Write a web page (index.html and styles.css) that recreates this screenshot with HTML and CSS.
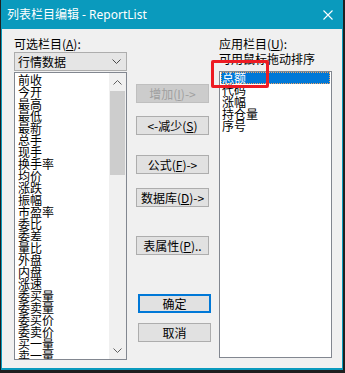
FILE: index.html
```html
<!DOCTYPE html>
<html lang="zh-CN">
<head>
    <meta charset="UTF-8">
    <title>列表栏目编辑 - ReportList</title>
    <link rel="stylesheet" href="styles.css">
</head>
<body>
    <div class="window">
        <div class="titlebar">
            <span class="title">列表栏目编辑 - ReportList</span>
            <svg class="close" width="10" height="10" viewBox="0 0 10 10">
                <path d="M0.5 0.5 L9.5 9.5 M9.5 0.5 L0.5 9.5" stroke="#fff" stroke-width="1.1" fill="none"/>
            </svg>
        </div>

        <div class="client">
            <!-- 可选栏目 -->
            <div class="col col-left">
                <div class="label">可选栏目(<u>A</u>):</div>
                <div class="combo">
                    <span>行情数据</span>
                    <svg width="9" height="5" viewBox="0 0 9 5">
                        <path d="M0.5 0.5 L4.5 4.5 L8.5 0.5" stroke="#4a4a4a" fill="none"/>
                    </svg>
                </div>
                <div class="listbox listbox-left">
                    <div class="items">
                        <div class="item">前收</div>
                        <div class="item">今开</div>
                        <div class="item">最高</div>
                        <div class="item">最低</div>
                        <div class="item">最新</div>
                        <div class="item">总手</div>
                        <div class="item">现手</div>
                        <div class="item">换手率</div>
                        <div class="item">均价</div>
                        <div class="item">涨跌</div>
                        <div class="item">振幅</div>
                        <div class="item">市盈率</div>
                        <div class="item">委比</div>
                        <div class="item">委差</div>
                        <div class="item">量比</div>
                        <div class="item">外盘</div>
                        <div class="item">内盘</div>
                        <div class="item">涨速</div>
                        <div class="item">委买量</div>
                        <div class="item">委卖量</div>
                        <div class="item">委买价</div>
                        <div class="item">委卖价</div>
                        <div class="item">买一量</div>
                        <div class="item">卖一量</div>
                    </div>
                    <div class="scrollbar">
                        <div class="sb-btn">
                            <svg width="9" height="5" viewBox="0 0 9 5">
                                <path d="M0.5 4.5 L4.5 0.5 L8.5 4.5" stroke="#606060" fill="none"/>
                            </svg>
                        </div>
                        <div class="sb-track">
                            <div class="sb-thumb"></div>
                        </div>
                        <div class="sb-btn">
                            <svg width="9" height="5" viewBox="0 0 9 5">
                                <path d="M0.5 0.5 L4.5 4.5 L8.5 0.5" stroke="#606060" fill="none"/>
                            </svg>
                        </div>
                    </div>
                </div>
            </div>

            <!-- 按钮 -->
            <div class="col col-mid">
                <button class="btn btn-disabled btn-add">增加(<u>I</u>)-&gt;</button>
                <button class="btn btn-del">&lt;-减少(<u>S</u>)</button>
                <button class="btn btn-formula">公式(<u>F</u>)-&gt;</button>
                <button class="btn btn-db">数据库(<u>D</u>)-&gt;</button>
                <button class="btn btn-prop">表属性(<u>P</u>)..</button>
                <button class="btn btn-default btn-ok">确定</button>
                <button class="btn btn-cancel">取消</button>
            </div>

            <!-- 应用栏目 -->
            <div class="col col-right">
                <div class="label">应用栏目(<u>U</u>):</div>
                <div class="label">可用鼠标拖动排序</div>
                <div class="listbox listbox-right">
                    <div class="items">
                        <div class="item selected">总额</div>
                        <div class="item">代码</div>
                        <div class="item">涨幅</div>
                        <div class="item">持仓量</div>
                        <div class="item">序号</div>
                    </div>
                </div>
            </div>
        </div>

        <div class="mark"></div>
    </div>
</body>
</html>
```

FILE: styles.css
```css
body {
    margin: 0;
    background-color: #1f1f1f;
    font-family: "Noto Sans CJK SC", sans-serif;
    font-size: 12px;
    color: #000;
}
.window {
    position: relative;
    width: 342px;
    height: 370px;
    margin-left: 1px;
    box-sizing: border-box;
    background-color: #f0f0f0;
    border: 1px solid #0a9abd;
    border-top: none;
    border-bottom-width: 2px;
}
.titlebar {
    height: 29px;
    display: flex;
    align-items: center;
    justify-content: space-between;
    padding: 0 10px 0 5px;
    margin: 0 -1px;
    background-color: #0a9abd;
    color: #fff;
}
.title {
    font-family: "Noto Sans", "Noto Sans CJK SC", sans-serif;
    font-size: 12px;
    line-height: 16px;
    padding-left: 1px;
}
.client {
    display: flex;
    padding: 7px 10px 0 12px;
}
.col-left {
    width: 113px;
}
.col-mid {
    width: 75px;
    margin-left: 9px;
    padding-top: 48px;
    display: flex;
    flex-direction: column;
}
.col-right {
    width: 113px;
    margin-left: 8px;
}
.label {
    line-height: 15px;
    white-space: nowrap;
}
u {
    text-decoration: underline;
    text-underline-offset: 1px;
}
.combo {
    margin-top: 1px;
    height: 19px;
    box-sizing: border-box;
    border: 1px solid #adadad;
    background-color: #e5e5e5;
    display: flex;
    align-items: center;
    justify-content: space-between;
    padding: 0 5px 0 3px;
    line-height: 17px;
}
.listbox {
    box-sizing: border-box;
    border: 1px solid #828790;
    background-color: #fff;
    overflow: hidden;
    display: flex;
}
.listbox-left {
    margin-top: 1px;
    height: 288px;
}
.listbox-right {
    margin-top: 5px;
    height: 287px;
}
.items {
    flex: 1;
    overflow: hidden;
}
.listbox-left .items {
    padding: 1px 0 0 2px;
}
.listbox-right .items {
    padding: 0 1px;
}
.item {
    height: 12px;
    line-height: 12px;
    white-space: nowrap;
    padding-left: 1px;
}
.selected {
    background-color: #0078d7;
    color: #fff;
    outline: 1px dotted #f3a564;
    outline-offset: -1px;
}
.scrollbar {
    width: 17px;
    display: flex;
    flex-direction: column;
    background-color: #f0f0f0;
}
.sb-btn {
    height: 18px;
    display: flex;
    align-items: center;
    justify-content: center;
    flex-shrink: 0;
}
.sb-track {
    flex: 1;
}
.sb-thumb {
    margin: 0 1px;
    height: 84px;
    background-color: #cdcdcd;
}
.btn {
    width: 73px;
    height: 19px;
    box-sizing: border-box;
    padding: 0;
    border: 1px solid #adadad;
    background-color: #e1e1e1;
    font-family: inherit;
    font-size: 12px;
    line-height: 17px;
    color: #000;
    text-align: center;
    white-space: nowrap;
}
.btn-disabled {
    background-color: #cccccc;
    border-color: #bfbfbf;
    color: #a0a0a0;
}
.btn-default {
    border: 2px solid #0078d7;
    line-height: 15px;
}
.btn-del {
    margin-top: 13px;
}
.btn-formula {
    margin-top: 20px;
}
.btn-db {
    margin-top: 14px;
}
.btn-prop {
    margin-top: 29px;
}
.btn-ok {
    margin-top: 39px;
    margin-left: 2px;
}
.btn-cancel {
    margin-top: 10px;
    margin-left: 2px;
}
.mark {
    position: absolute;
    left: 209px;
    top: 60px;
    width: 58px;
    height: 28px;
    box-sizing: border-box;
    border: 3px solid #ed1c24;
    border-radius: 2px;
}
```
